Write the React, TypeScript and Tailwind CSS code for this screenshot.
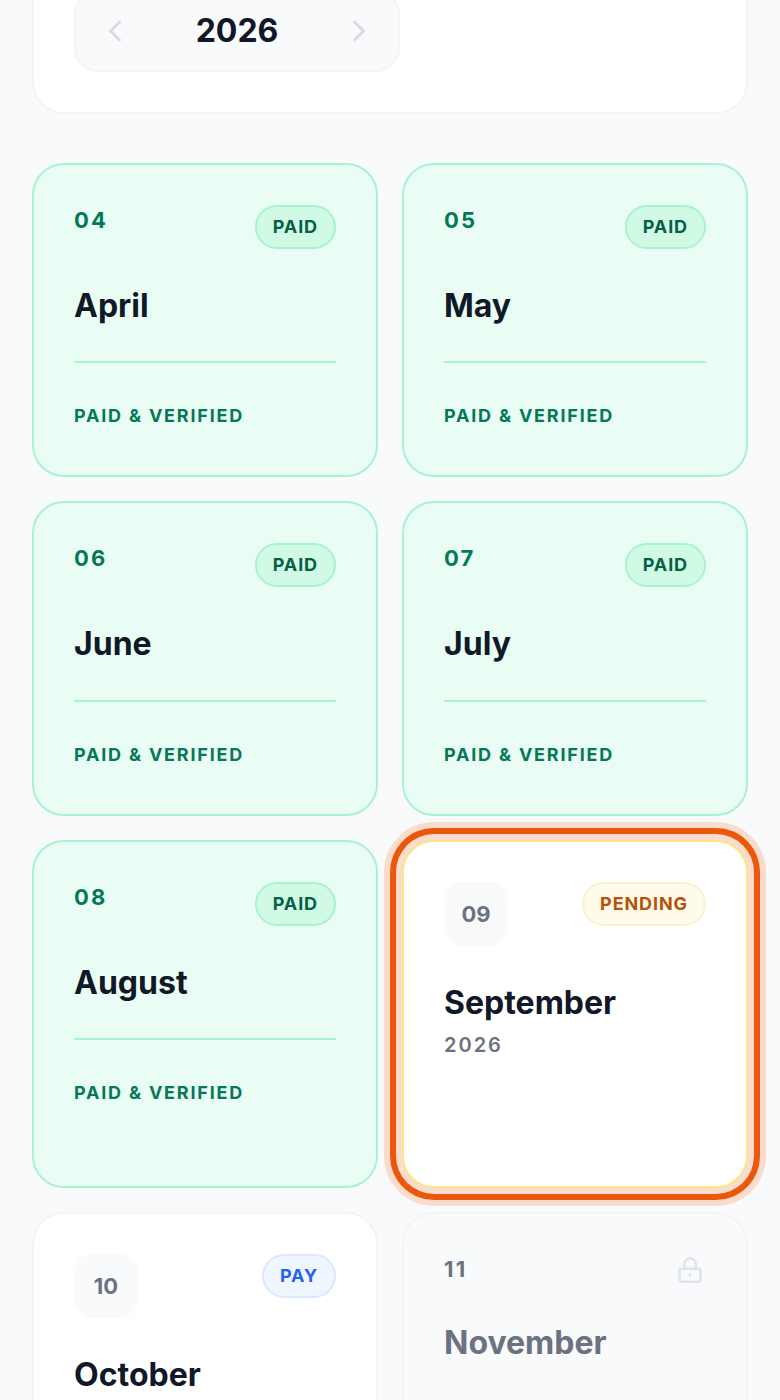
import { ChevronLeft, ChevronRight } from "lucide-react";

const font = { fontFamily: "Inter, sans-serif" };

function Paid({ num, month, h, gap }: { num: string; month: string; h: string; gap: string }) {
  return (
    <div className={`flex flex-col rounded-[32px] border-2 border-[#a7f3d0] bg-[#eafdf4] px-[40px] pt-[40px] ${h}`}>
      <div className="flex h-[44px] items-start justify-between">
        <span className="mt-[1px] text-[22px] leading-[28px] font-bold tracking-[0.1em] text-[#047857]">{num}</span>
        <span className="flex h-[44px] items-center rounded-full border-2 border-[#a7f3d0] bg-[#d1fae5] px-[16px] pb-[1px] text-[18px] font-bold tracking-[0.05em] text-[#065f46]">PAID</span>
      </div>
      <div className="mt-[33px] text-[32px] leading-[48px] font-bold text-[#111827]">{month}</div>
      <div className={`h-[2px] bg-[#a7f3d0] ${gap}`} />
      <div className="mt-[39px] text-[18px] leading-[28px] font-bold tracking-[0.1em] text-[#047857]">PAID &amp; VERIFIED</div>
    </div>
  );
}

function NumBox({ n }: { n: string }) {
  return (
    <span className="flex h-[64px] w-[64px] items-center justify-center rounded-[20px] border-2 border-[#f9fafc] bg-[#f9fafc] text-[22px] font-bold text-[#6b7280]">{n}</span>
  );
}

export default function App() {
  return (
    <div style={font} className="h-[1400px] overflow-hidden bg-[#f9fafc] px-[32px]">
      <div className="-mt-[10px] rounded-b-[32px] border-2 border-t-0 border-[#f3f4f6] bg-white px-[40px] pb-[40px]">
        <div className="flex h-[82px] w-[326px] items-center justify-between rounded-[24px] border-2 border-[#f3f4f6] bg-[#f9fafc] px-[21px]">
          <ChevronLeft size={36} strokeWidth={2} className="text-[#d9dbe0]" />
          <span className="text-[32px] font-bold text-[#111827]">2026</span>
          <ChevronRight size={36} strokeWidth={2} className="text-[#d9dbe0]" />
        </div>
      </div>

      <div className="mt-[49px] grid grid-cols-2 gap-x-[24px] gap-y-[24px]">
        <Paid num="04" month="April" h="h-[314px]" gap="mt-[31px]" />
        <Paid num="05" month="May" h="h-[314px]" gap="mt-[31px]" />
        <Paid num="06" month="June" h="h-[315px]" gap="mt-[32px]" />
        <Paid num="07" month="July" h="h-[315px]" gap="mt-[32px]" />
        <Paid num="08" month="August" h="h-[348px]" gap="mt-[31px]" />

        <div className="flex h-[348px] flex-col rounded-[32px] border-2 border-[#fde68a] bg-white px-[40px] pt-[40px] shadow-[0_0_0_6px_#f9dccb,0_0_0_12px_#ea580c,0_0_0_18px_#f9dccb]">
          <div className="flex items-start justify-between">
            <NumBox n="09" />
            <span className="flex h-[44px] items-center rounded-full border-2 border-[#fef3c7] bg-[#fffbeb] px-[16px] pb-[1px] text-[18px] font-bold tracking-[0.05em] text-[#b45309]">PENDING</span>
          </div>
          <div className="mt-[33px] text-[32px] leading-[48px] font-bold text-[#111827]">September</div>
          <div className="mt-[4px] text-[20px] leading-[28px] font-semibold tracking-[0.1em] text-[#6b7280]">2026</div>
        </div>

        <div className="h-[320px] rounded-[32px] border-2 border-[#f3f4f6] bg-white px-[40px] pt-[40px]">
          <div className="flex items-start justify-between">
            <NumBox n="10" />
            <span className="flex h-[44px] items-center rounded-full border-2 border-[#dbeafe] bg-[#eff6ff] px-[16px] pb-[1px] text-[18px] font-bold tracking-[0.05em] text-[#2563eb]">PAY</span>
          </div>
          <div className="mt-[33px] text-[32px] leading-[48px] font-bold text-[#111827]">October</div>
        </div>

        <div className="h-[320px] rounded-[32px] border-2 border-[#f3f4f6] bg-[#f9fafc] px-[40px] pt-[40px]">
          <div className="flex h-[44px] items-start justify-between">
            <span className="mt-[1px] text-[22px] leading-[28px] font-bold tracking-[0.1em] text-[#6b7280]">11</span>
            <svg width="28" height="28" viewBox="0 0 24 24" fill="none" stroke="#e1e4e8" strokeWidth="2.2" strokeLinecap="round" strokeLinejoin="round" className="mt-[2px] mr-[2px]">
              <rect x="3" y="11" width="18" height="11" rx="2" />
              <path d="M7 11V7a5 5 0 0 1 10 0v4" />
              <path d="M12 16v1" />
            </svg>
          </div>
          <div className="mt-[21px] text-[32px] leading-[48px] font-bold text-[#6b7280]">November</div>
        </div>
      </div>
    </div>
  );
}
